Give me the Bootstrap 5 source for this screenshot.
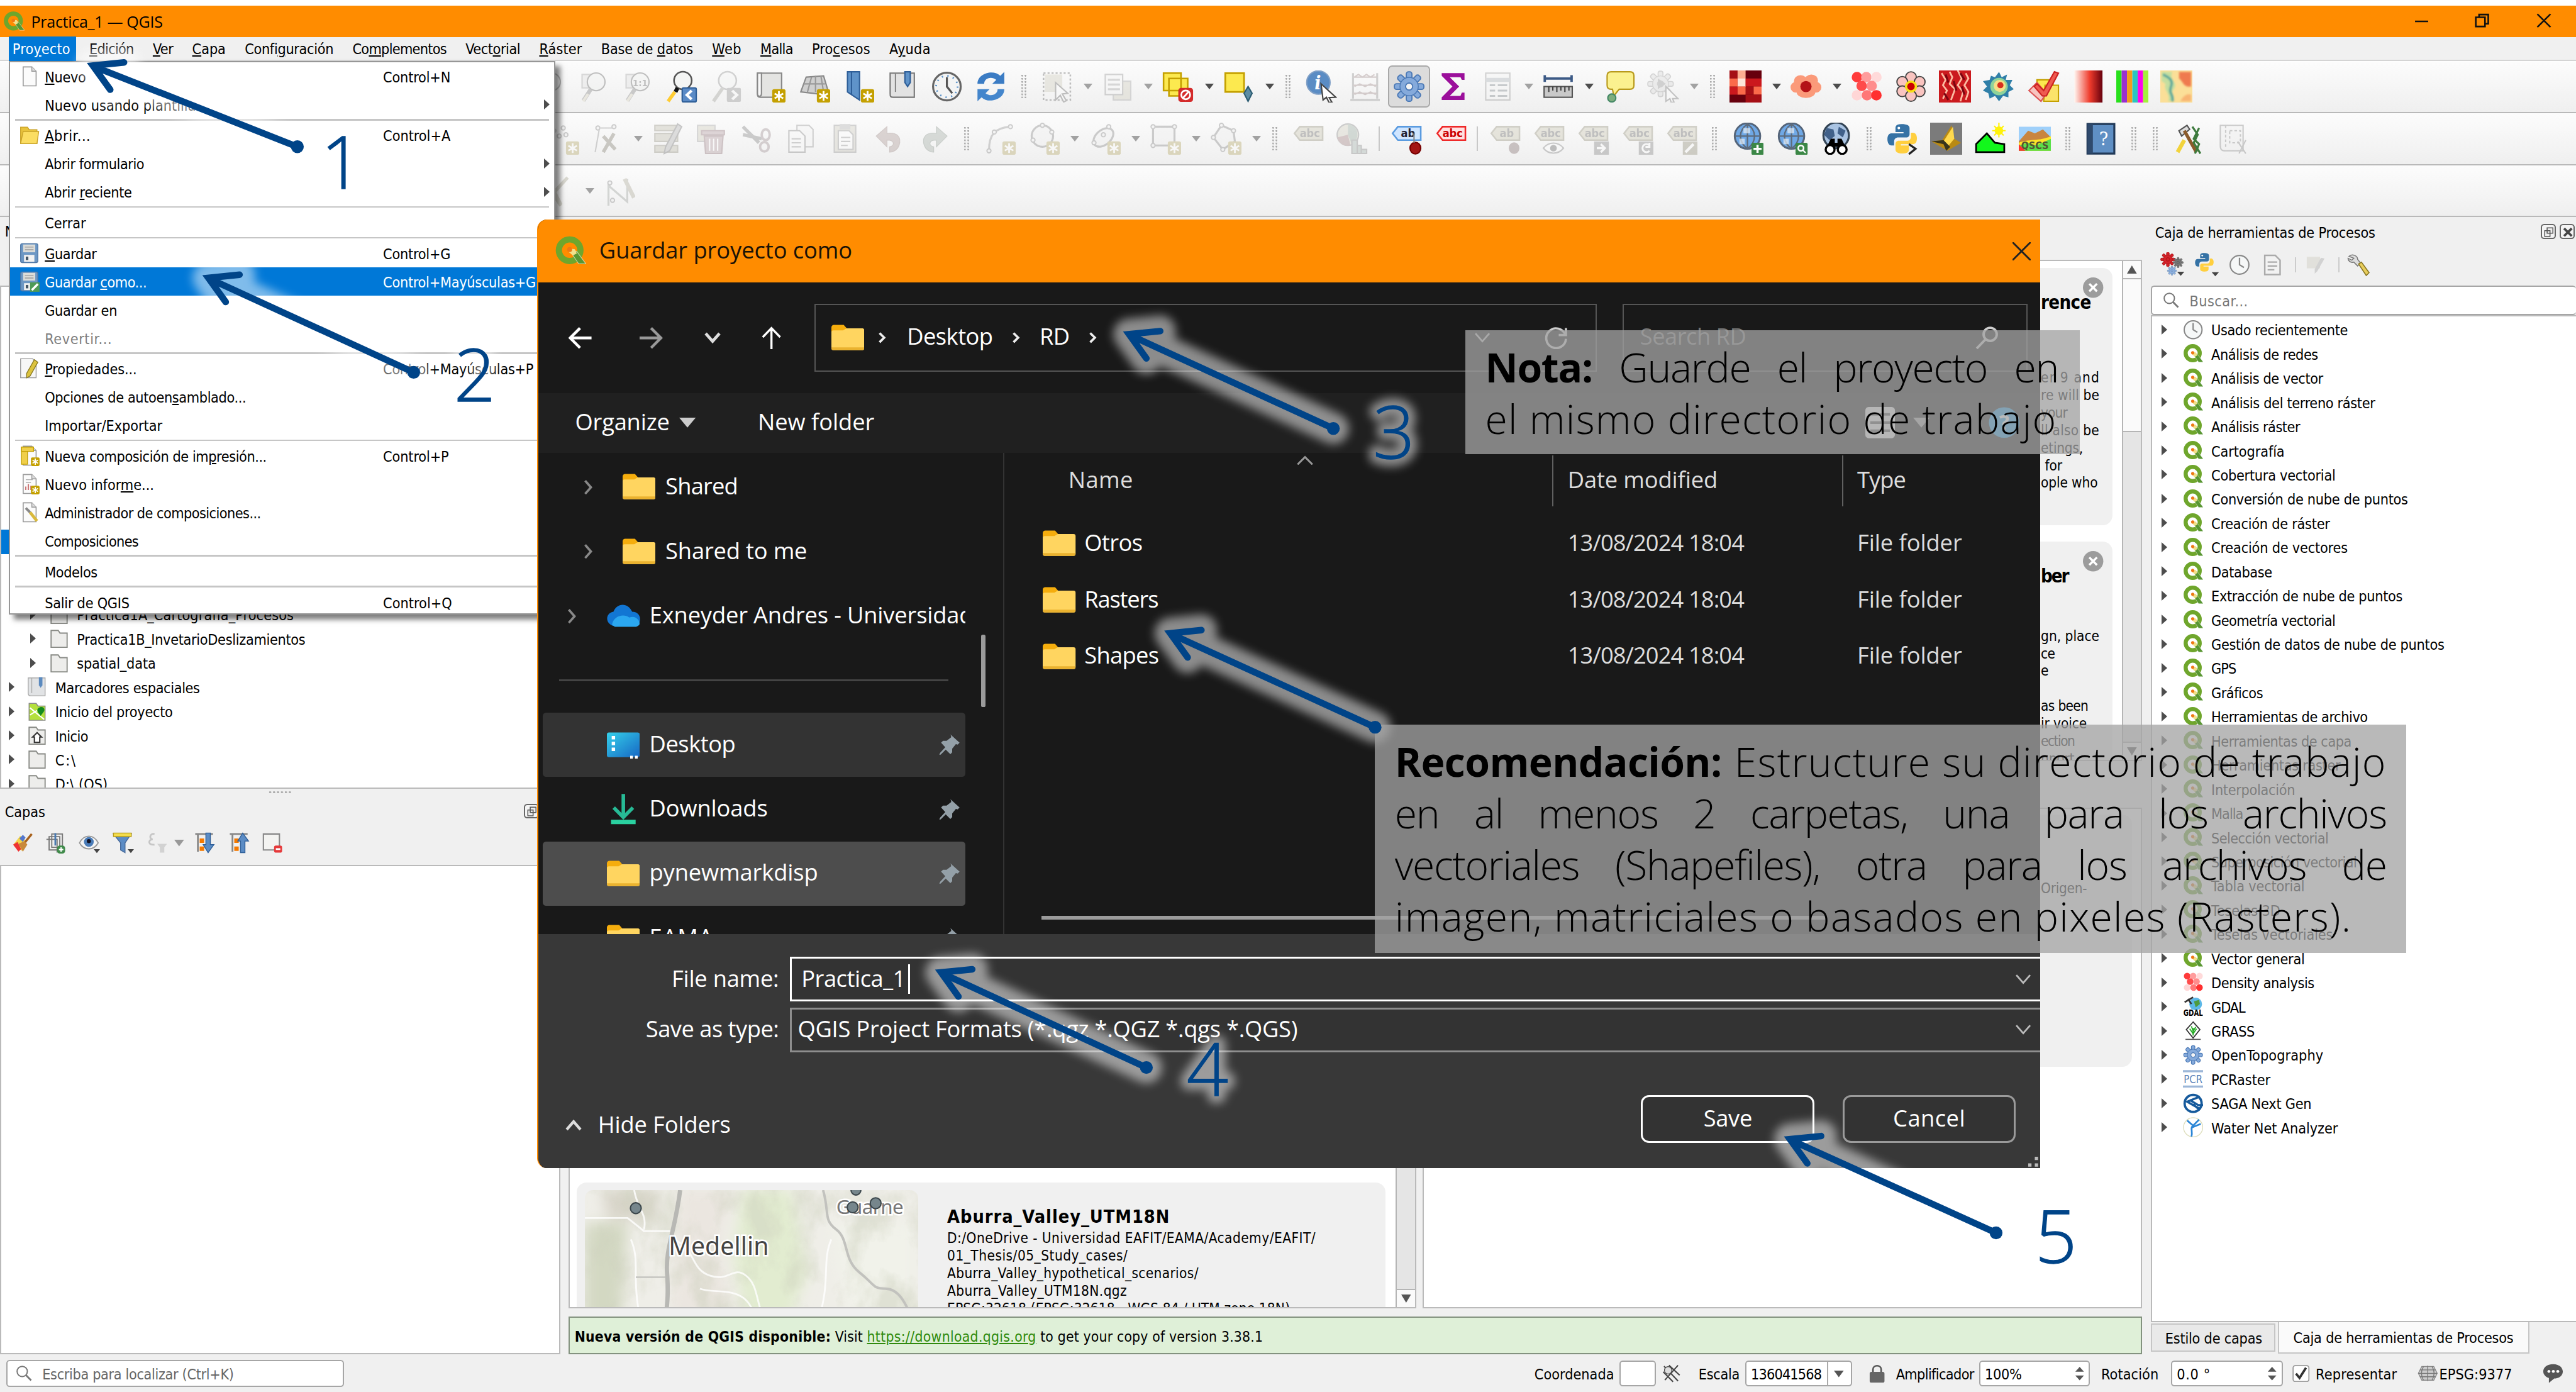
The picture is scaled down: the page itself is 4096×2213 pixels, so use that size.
<!DOCTYPE html>
<html lang="es">
<head>
<meta charset="utf-8">
<title>Practica_1 — QGIS</title>
<link href="https://cdn.jsdelivr.net/npm/bootstrap@5.3.0/dist/css/bootstrap.min.css" rel="stylesheet">
<style>
html,body{margin:0;overflow:hidden;background:#fff}
.stage{width:1568px;height:847.17px;zoom:2.612245;position:relative;overflow:hidden;background:#f0f0f0;font-family:"DejaVu Sans Condensed","DejaVu Sans",sans-serif;font-stretch:condensed;font-size:8.9px;line-height:1.2;color:#000}
.stage svg{display:block;flex:none}
.stage [data-w]{display:inline-block;white-space:nowrap;flex:none;padding-top:1.1px}
.stage .seg [data-w],.stage .note [data-w]{padding-top:0}
.stage .dlg [data-w]{padding-bottom:1.2px}
.seg{font-family:"Open Sans","Noto Sans",sans-serif;font-stretch:normal}
.topstrip{height:3.5px;background:#fff}
.titlebar{height:18.9px;background:#ff8c00;padding:0 14px 0 2px}
.menubar{height:14.6px;padding-left:7.6px;gap:11.6px;background:#f0f0f0;border-bottom:1px solid #d4d4d4}
.menubar .on{position:relative;color:#fff;z-index:1}
.menubar .on::before{content:"";position:absolute;z-index:-1;left:-2.4px;right:-3.6px;top:-1.4px;height:15px;background:#0078d7}
.tbar{height:31.75px;background:linear-gradient(#fcfcfc,#efefef);border-bottom:1px solid #b9b9b9;border-top:.5px solid #fff}
.cell{width:26.95px;height:25.4px;display:flex;align-items:center;justify-content:center;flex:none}
.cell.pressed{background:#dcdcdc;border:.8px solid #a9a9a9;border-radius:2.5px;width:25.6px;margin:0 .67px}
.caretcell{width:9.9px;display:flex;justify-content:center;flex:none;padding-left:1px}
.caretcell i{border:2.8px solid transparent;border-top:3.6px solid #4d4d4d;border-bottom:0}
.gripcell{width:13.2px;display:flex;justify-content:center;flex:none}
.gripcell i{width:3px;height:14px;background:radial-gradient(circle at .5px .5px,#aaa .45px,transparent .6px) 0 0/2px 1.9px}
.sepcell{width:6px;display:flex;justify-content:center;flex:none}
.sepcell i{width:.8px;height:15px;background:#c8c8c8}
.dim{opacity:.34;filter:saturate(.45)}
.mainarea{height:692.1px}
.dockl{width:341px;flex:none}
.pane{background:#fff;border:1px solid #bababa}
.trow{height:14.72px;display:flex;align-items:center;flex:none;white-space:nowrap}
.tri{width:0;height:0;border:3.1px solid transparent;border-left:3.8px solid #4d4d4d;border-right:0;flex:none}
.dockbtn{width:9px;height:9px;border:.9px solid #666;border-radius:2px;background:#f4f4f4;flex:none;padding:.6px}
.ctr{width:958px;margin-left:5px;flex:none}
.ncard{background:#f0f0f0;border-radius:6px;flex:none}
.sbar{width:11.7px;background:#e5e5e5;border-left:.8px solid #b5b5b5;flex:none}
.sbtn{height:11px;background:#fafafa;display:flex;align-items:center;justify-content:center;border:0 solid #b5b5b5;flex:none}
.nl{height:10.65px;white-space:nowrap}
.greenbar{height:23px;background:#dff0d8;border:1px solid #83927f;padding:1px 0 0 3px}
.greenbar a{color:#2f8a0b}
.dockr{width:258.8px;margin-left:5.2px;flex:none}
.tabx{border:.8px solid #c6c6c6;height:17px;display:flex;align-items:center;background:#e9e9e9}
.statusbar{height:23px;padding-left:4px;background:#f0f0f0}
.fld{background:#fff;border:.9px solid #a6a6a6;border-radius:2px;height:15.6px;display:flex;align-items:center;flex:none}
.menu1{position:absolute;left:5.2px;top:37px;width:333px;height:337.2px;background:#fff;border:.9px solid #979797;box-shadow:3px 3px 3px rgba(0,0,0,.5);z-index:2}
.mi{height:17.2px;display:flex;align-items:center;padding-left:5.6px}
.mi .mico{width:15.7px;flex:none}
.mi .mt{width:205.9px;flex:none}
.mi.hot{background:#0078d7;color:#fff}
.msep{height:1.5px;padding:.2px 3.2px}
.msep i{display:block;height:1px;background:#c6c6c6}
.dlg{position:absolute;left:327px;top:133.7px;width:914.7px;height:577.3px;z-index:3;background:#191919;border-left:1.1px solid #ff8c00;border-radius:6px 0 0 6px;overflow:hidden;color:#fff;font-size:13.9px;font-weight:400}
.dtitle{height:38.2px;background:#ff8c00;color:#1a1206;padding:0 5.7px 0 10px}
.dnav{height:67.2px;padding-left:18.4px}
.dbox{height:41.4px;border:1px solid #555;flex:none;display:flex;align-items:center}
.dtool{height:36.5px;background:#202020;padding:0 12.3px 0 22.3px}
.dbody{height:292.8px}
.dtree{width:283.5px;border-right:1px solid #333;position:relative;padding:1.3px 0 0 2.7px;overflow:hidden;flex:none}
.drow{height:39.2px;width:257.2px;display:flex;align-items:center;overflow:hidden;border-radius:2px;white-space:nowrap}
.thumb{position:absolute;left:269.6px;top:110.7px;width:2.5px;height:44px;border-radius:1px;background:#9b9b9b}
.lgrid{display:grid;grid-template-columns:334.4px 176.4px 1fr;align-items:center;flex:none}
.lh>div{height:31px;display:flex;align-items:center;border-right:1px solid #606060;color:#ddd}
.lh>div:last-child{border:0}
.dfoot{height:142.6px;background:#383838;padding-top:14px}
.inp{flex:1;height:27.2px;background:#333;border:1.4px solid #fff;border-right:0;display:flex;align-items:center;padding:0 5px 0 6px}
.dbtn{width:105.6px;height:29px;background:#333;border:1.4px solid #fff;border-radius:5px;color:#fff;font-size:13.9px;padding:0;line-height:1}
.note{position:absolute;z-index:5;background:rgba(163,163,163,.76);font-family:"Open Sans","Noto Sans",sans-serif;font-weight:300;font-stretch:normal;font-size:24.6px;color:#000;padding:6.4px 12px 0}
.note div{height:31.4px;line-height:31.4px;text-align:justify;text-align-last:justify;white-space:nowrap}
.note b{font-weight:700}
.ann{position:absolute;left:0;top:0;z-index:6;pointer-events:none}
.num{font-family:"Open Sans",sans-serif;font-weight:300;font-stretch:normal;font-size:44.5px}
</style>
<script src="https://cdn.jsdelivr.net/npm/bootstrap@5.3.0/dist/js/bootstrap.bundle.min.js"></script>
</head>
<body>
<div class="stage">
  <div class="topstrip"></div>
  <div class="titlebar d-flex align-items-center">
    <span data-i="q" data-s="13"></span>
    <span class="seg ms-1" style="font-size:9.6px"><span data-w="80">Practica_1 — QGIS</span></span>
    <svg class="ms-auto" width="84" height="10" viewBox="0 0 84 10" fill="none" stroke="#111" stroke-width="1"><path d="M0 5h8M74.500 .5l8 8m0-8l-8 8"/><path d="M37 2.500h5.600v5.600H37zM39 2.500V.8h5.600v5.600h-2"/></svg>
  </div>
  <div class="menubar d-flex align-items-center">
    <span class="on" data-w="35.2">Pro<u>y</u>ecto</span><span data-w="27"><u>E</u>dición</span><span data-w="12.4"><u>V</u>er</span><span data-w="20.4"><u>C</u>apa</span><span data-w="54">Confi<u>g</u>uración</span><span data-w="57.2">Co<u>m</u>plementos</span><span data-w="33.3">Vect<u>o</u>rial</span><span data-w="26"><u>R</u>áster</span><span data-w="56">Base de <u>d</u>atos</span><span data-w="17.8"><u>W</u>eb</span><span data-w="19.8"><u>M</u>alla</span><span data-w="35.4">Pro<u>c</u>esos</span><span data-w="25.2">A<u>y</u>uda</span>
  </div>
  <div class="tbar d-flex align-items-center" id="tb1" style="padding-left:320.3px"></div>
  <div class="tbar d-flex align-items-center" id="tb2" style="padding-left:329.4px"></div>
  <div class="tbar d-flex align-items-center" id="tb3" style="padding-left:326.5px"></div>

  <div class="mainarea d-flex">
    <div class="dockl d-flex flex-column">
      <div class="d-flex align-items-center" style="height:17px;padding-left:3px">Navegador</div>
      <div style="height:24.4px"></div>
      <div class="pane overflow-hidden" style="height:306.5px;padding-top:.9px" id="browser"></div>
      <div class="d-flex justify-content-center" style="height:5px;padding-top:1px"><span style="width:14px;height:2px;background:radial-gradient(circle at 1px 1px,#aaa .6px,transparent .7px) 0 0/2.4px 2px"></span></div>
      <div class="d-flex align-items-center" style="height:17px;padding-left:3px"><span data-w="24.5">Capas</span><span class="dockbtn ms-auto" data-i="float" data-s="7" style="margin-right:13px"></span></div>
      <div class="d-flex align-items-center" style="height:24.4px;padding:0 0 2.4px 5px" id="capastb"></div>
      <div class="pane flex-grow-1"></div>
    </div>

    <div class="ctr d-flex flex-column">
      <div class="d-flex" style="height:664px">
        <div class="pane d-flex" style="width:516px;margin-top:26px">
          <div class="flex-grow-1 d-flex flex-column overflow-hidden" style="padding:560.6px 6px 0 4.4px">
            <div class="ncard d-flex" style="height:110px;padding:4.8px 4.8px 0">
              <svg width="203" height="80" viewBox="0 0 203 80" style="border-radius:5px" id="map">
                <defs><filter id="ft" x="0" y="0" width="1" height="1"><feTurbulence type="fractalNoise" baseFrequency=".05 .035" numOctaves="5" seed="7"/><feColorMatrix values="0 0 0 0 .62  0 0 0 0 .64  0 0 0 0 .52  0 3 0 0 -1.3"/></filter><filter id="bl"><feGaussianBlur stdDeviation="4"/></filter></defs>
                <rect width="203" height="80" fill="#efeee8"/>
                <g filter="url(#bl)"><path d="M58 0h32l-8 30 8 50H52z" fill="#ebe6e0"/><path d="M96 0h30l10 50-12 30H98L90 40z" fill="#e2ecd0"/><path d="M0 20h26l-4 60H0z" fill="#d3d8c2"/><path d="M10 0h34v18H14z" fill="#d9d5ca"/><path d="M150 20h50v60h-40z" fill="#f1f2ea"/></g>
                <rect width="203" height="80" filter="url(#ft)" opacity=".5"/>
                <g fill="none" stroke="#fff" stroke-width="1.1" opacity=".8"><path d="M0 17h26l10 8h16M30 0c2 12 8 14 6 24M28 30c6 14 0 22 6 50M54 30c14 6 10 18 22 22s14-6 22 0 6 18 12 28M70 60c10 4 30-4 34 20M150 30c-6 14 0 24-8 50"/></g>
                <path d="M58 0c-3 24-9 36-8 50s0 20-1 30" fill="none" stroke="#b8b8b4" stroke-width="2.600"/>
                <path d="M145 0c4 14 0 18 8 24s4 18 14 26 8 10 16 10 12 8 18 22" fill="none" stroke="#c2c2be" stroke-width="1.500"/>
                <path d="M31 53h18" stroke="#c5c5c0" stroke-width="1"/>
                <g font-family="Noto Sans" fill="#444" stroke="#fff" stroke-width="2" paint-order="stroke"><text x="51" y="39.5" font-size="15" textLength="61">Medellin</text><text x="153" y="14.5" font-size="12" textLength="41" fill="#777">Guarne</text></g>
                <g fill="#76868c" stroke="#3b464b" stroke-width=".8"><circle cx="31" cy="11" r="3.3"/><circle cx="163" cy="10.5" r="3.3"/><circle cx="177" cy="8" r="3.3"/><circle cx="165" cy="0" r="3"/></g>
              </svg>
              <div style="margin-left:17.6px;padding-top:8.4px;font-size:8.6px">
                <div class="fw-bold" style="font-size:11px;height:14.7px"><span data-w="135.6">Aburra_Valley_UTM18N</span></div>
                <div class="nl"><span data-w="224.3">D:/OneDrive - Universidad EAFIT/EAMA/Academy/EAFIT/</span></div>
                <div class="nl"><span data-w="110">01_Thesis/05_Study_cases/</span></div>
                <div class="nl"><span data-w="153">Aburra_Valley_hypothetical_scenarios/</span></div>
                <div class="nl"><span data-w="109.5">Aburra_Valley_UTM18N.qgz</span></div>
                <div class="nl"><span data-w="208.7">EPSG:32618 (EPSG:32618 - WGS 84 / UTM zone 18N)</span></div>
              </div>
            </div>
          </div>
          <div class="sbar d-flex flex-column justify-content-end"><div class="sbtn" style="border-top-width:.8px"><svg width="6" height="5"><path d="M0 0h6L3 5z" fill="#555"/></svg></div></div>
        </div>
        <div class="d-flex flex-column" style="width:438px;margin-left:4px;padding-top:26px">
          <div class="pane d-flex" style="height:305px">
            <div class="flex-grow-1 overflow-hidden" style="padding:4px 5.6px 0 4px;font-size:8.6px">
              <div class="ncard d-flex flex-column" style="height:156.5px;padding:6px 5.6px 0 371.5px">
                <span class="ms-auto" data-i="xb" data-s="12.4"></span>
                <div class="fw-bold" style="font-size:11.2px;height:43.4px;margin-top:-5px"><span data-w="30.5">rence</span></div>
                <div class="nl mt-1"><span data-w="36">er 9 and</span></div>
                <div class="nl"><span data-w="35.6">re will be</span></div>
                <div class="nl"><span data-w="16">your</span></div>
                <div class="nl"><span data-w="35.6">ll also be</span></div>
                <div class="nl"><span data-w="25.6">etings,</span></div>
                <div class="nl" style="padding-left:2.5px"><span data-w="10.5">for</span></div>
                <div class="nl"><span data-w="34.6">ople who</span></div>
              </div>
              <div class="ncard d-flex flex-column" style="height:156.5px;margin-top:10px;padding:6px 5.6px 0 371.5px">
                <span class="ms-auto" data-i="xb" data-s="12.4"></span>
                <div class="fw-bold" style="font-size:11.2px;height:38px;margin-top:-5px"><span data-w="16.6">ber</span></div>
                <div class="nl"><span data-w="35.6">gn, place</span></div>
                <div class="nl"><span data-w="8.6">ce</span></div>
                <div class="nl"><span data-w="4.6">e</span></div>
                <div class="nl"></div>
                <div class="nl"><span data-w="28.8">as been</span></div>
                <div class="nl"><span data-w="28">ir voice</span></div>
                <div class="nl"><span data-w="20.4">ection</span></div>
                <div class="nl"><span data-w="20.4">nport</span></div>
              </div>
            </div>
            <div class="sbar d-flex flex-column"><div class="sbtn" style="border-bottom-width:.8px"><svg width="6" height="5"><path d="M0 5h6L3 0z" fill="#555"/></svg></div><div style="height:93px;background:#fafafa;border-bottom:.8px solid #b5b5b5"></div><div class="sbtn mt-auto" style="border-top-width:.8px"><svg width="6" height="5"><path d="M0 0h6L3 5z" fill="#555"/></svg></div></div>
          </div>
          <div class="pane flex-grow-1" style="margin-top:28.2px;padding:3.6px 5.6px 0 4px;font-size:8.6px">
            <div class="ncard" style="height:153.4px;padding:38.5px 0 0 371.5px"><div class="nl"><span data-w="28">Origen-</span></div></div>
          </div>
        </div>
      </div>
      <div class="greenbar d-flex align-items-center" style="margin-top:5px"><span style="font-size:8.7px"><b data-w="156">Nueva versión de QGIS disponible:</b> <span data-w="17">Visit</span> <a href="#" data-w="103">https://download.qgis.org</a> <span data-w="135.500">to get your copy of version 3.38.1</span></span></div>
    </div>

    <div class="dockr d-flex flex-column">
      <div class="d-flex align-items-center" style="height:17.4px;padding:0 .8px 0 2.6px"><span data-w="134">Caja de herramientas de Procesos</span><span class="dockbtn ms-auto" data-i="float" data-s="7"></span><span class="dockbtn" data-i="xdock" data-s="7" style="margin-left:2.6px"></span></div>
      <div class="d-flex align-items-center" style="height:23px;padding-left:5px" id="ptb"></div>
      <div class="fld" style="height:17.8px;border-right:0;padding-left:6.5px;margin-top:1.2px"><span data-i="mags" data-s="10"></span><span style="margin-left:6.3px;color:#777" data-w="35.7">Buscar...</span></div>
      <div class="pane overflow-hidden border-end-0" style="height:612.6px;padding-top:.5px;margin-top:.3px" id="ptree"></div>
      <div class="d-flex align-items-start"><div class="tabx" style="width:76px;padding-left:8px;margin-top:1px"><span data-w="59">Estilo de capas</span></div><div class="tabx" style="width:153px;height:19.4px;padding-left:8.5px;margin-left:1.5px;background:#fafafa;border-top:0"><span data-w="134">Caja de herramientas de Procesos</span></div></div>
    </div>
  </div>

  <div class="statusbar d-flex align-items-center">
    <div class="fld" style="width:205.5px;height:16.4px;padding-left:5px"><span data-i="mags" data-s="10"></span><span style="margin-left:6px;color:#666" data-w="116.5">Escriba para localizar (Ctrl+K)</span></div>
    <span style="margin-left:724.5px" data-w="48.5">Coordenada</span>
    <div class="fld" style="width:22px;margin-left:3.4px"></div>
    <span style="margin-left:3.5px" data-i="wheels" data-s="12"></span>
    <span style="margin-left:10.5px" data-w="25">Escala</span>
    <div class="fld" style="width:65px;margin-left:3.6px;padding-left:2.5px"><span data-w="43">136041568</span><span style="border-left:.8px solid #aaa;height:14px;margin-left:3.4px;padding:5.4px 0 0 3.4px"><svg width="6" height="4"><path d="M0 0h6L3 4z" fill="#555"/></svg></span></div>
    <span style="margin-left:9px" data-i="lock" data-s="12"></span>
    <span style="margin-left:5.600px" data-w="47.5">Amplificador</span>
    <div class="fld" style="width:67.6px;margin-left:3px;padding-left:2.8px"><span data-w="22.5">100%</span><span class="ms-auto" style="margin-right:1px" data-i="spin" data-s="9"></span></div>
    <span style="margin-left:6.8px" data-w="35">Rotación</span>
    <div class="fld" style="width:68px;margin-left:7.5px;padding-left:2.8px"><span data-w="20.5">0.0 °</span><span class="ms-auto" style="margin-right:1px" data-i="spin" data-s="9"></span></div>
    <span style="margin-left:6px" data-i="check" data-s="10.5"></span>
    <span style="margin-left:3.6px" data-w="49.5">Representar</span>
    <span style="margin-left:12.6px" data-i="wglobe" data-s="12.5"></span>
    <span style="margin-left:.6px" data-w="44.5">EPSG:9377</span>
    <span style="margin-left:18.5px" data-i="talk" data-s="13"></span>
  </div>

  <div class="menu1" id="menu1"></div>

  <div class="dlg seg">
    <div class="dtitle d-flex align-items-center"><span data-i="q" data-s="19"></span><span style="margin-left:8px" data-w="154">Guardar proyecto como</span><svg class="ms-auto" width="11" height="11" viewBox="0 0 11 11"><path d="M0 0l11 11M11 0L0 11" stroke="#222" stroke-width="1.1"/></svg></div>
    <div class="dnav d-flex align-items-center">
      <svg width="14" height="14" viewBox="0 0 14 14" fill="none" stroke="#fff" stroke-width="1.7"><path d="M14 7H1M7 1L1 7l6 6"/></svg>
      <svg width="14" height="14" viewBox="0 0 14 14" fill="none" stroke="#999" stroke-width="1.7" style="margin-left:29.3px"><path d="M0 7h13M7 1l6 6-6 6"/></svg>
      <svg width="10" height="7" viewBox="0 0 10 7" fill="none" stroke="#ddd" stroke-width="1.8" style="margin-left:25.4px"><path d="M.8.8L5 5.6 9.2.8"/></svg>
      <svg width="12" height="14" viewBox="0 0 12 14" fill="none" stroke="#fff" stroke-width="1.3" style="margin-left:24.6px"><path d="M6 14V1M.7 6.5L6 1l5.3 5.5"/></svg>
      <div class="dbox" style="width:476.2px;margin-left:20.4px;padding:0 17px 0 9.4px">
        <span data-i="folder" data-s="20"></span>
        <span data-i="chev" data-s="7.5" style="margin-left:7px"></span><span style="margin-left:11.6px" data-w="52.2">Desktop</span>
        <span data-i="chev" data-s="7.5" style="margin-left:10px"></span><span style="margin-left:11px" data-w="18.2">RD</span>
        <span data-i="chev" data-s="7.5" style="margin-left:10px"></span>
        <svg class="ms-auto" width="10" height="7" viewBox="0 0 10 7" fill="none" stroke="#bbb" stroke-width="1.1"><path d="M.8.8L5 5.6 9.2.8"/></svg>
        <svg width="14" height="14" viewBox="0 0 14 14" fill="none" stroke="#ccc" stroke-width="1.4" style="margin-left:33px"><path d="M12.6 5A6 6 0 1 0 13 7.5M13 1v4.2H8.6"/></svg>
      </div>
      <div class="dbox" style="width:246.5px;margin-left:15.5px;padding:0 17px 0 10px;color:#777"><span data-w="64.5">Search RD</span><svg class="ms-auto" width="14" height="14" viewBox="0 0 14 14" fill="none" stroke="#ccc" stroke-width="1.5"><circle cx="9" cy="4.8" r="4"/><path d="M6.2 7.8L.8 13.4"/></svg></div>
    </div>
    <div class="dtool d-flex align-items-center">
      <span data-w="57.5">Organize</span><svg width="10" height="6" style="margin-left:6px"><path d="M0 0h10L5 6z" fill="#ccc"/></svg>
      <span style="margin-left:37.7px" data-w="71">New folder</span>
      <svg class="ms-auto" width="18" height="19" viewBox="0 0 18 19"><rect width="18" height="19" rx="2" fill="#f0f0f0"/><path d="M3 4.5h12M3 9.5h12M3 14.5h12" stroke="#555" stroke-width="1.6"/></svg>
      <svg width="10" height="6" style="margin-left:11px"><path d="M0 0h10L5 6z" fill="#aaa"/></svg>
      <svg width="19" height="19" viewBox="0 0 19 19" style="margin-left:36px"><circle cx="9.5" cy="9.5" r="9.3" fill="#1d9fe8"/><text x="9.5" y="14" font-size="13" font-weight="700" text-anchor="middle" fill="#fff">?</text></svg>
    </div>
    <div class="dbody d-flex">
      <div class="dtree">
        <div class="drow"><span data-i="chevt" data-s="12" style="margin-left:21.9px"></span><span data-i="folder" data-s="20" style="margin-left:14.7px"></span><span style="margin-left:6px" data-w="44">Shared</span></div>
        <div class="drow"><span data-i="chevt" data-s="12" style="margin-left:21.9px"></span><span data-i="folder" data-s="20" style="margin-left:14.7px"></span><span style="margin-left:6px" data-w="86.2">Shared to me</span></div>
        <div class="drow"><span data-i="chevt" data-s="12" style="margin-left:11.9px"></span><span data-i="cloud" data-s="21" style="margin-left:14.5px"></span><span style="margin-left:5.5px" data-w="197">Exneyder Andres - Universidad</span></div>
        <div class="drow"><span style="height:1px;width:237px;background:#444;margin-left:9.8px"></span></div>
        <div class="drow" style="background:#333"><span data-i="desk" data-s="20" style="margin-left:38.8px"></span><span style="margin-left:6px" data-w="52.4">Desktop</span><span class="ms-auto" style="margin-right:3px" data-i="pin" data-s="13.5"></span></div>
        <div class="drow"><span data-i="down" data-s="20" style="margin-left:38.8px"></span><span style="margin-left:6px" data-w="72">Downloads</span><span class="ms-auto" style="margin-right:3px" data-i="pin" data-s="13.5"></span></div>
        <div class="drow" style="background:#4d4d4d"><span data-i="folder" data-s="20" style="margin-left:38.8px"></span><span style="margin-left:6px" data-w="102.6">pynewmarkdisp</span><span class="ms-auto" style="margin-right:3px" data-i="pin" data-s="13.5"></span></div>
        <div class="drow"><span data-i="folder" data-s="20" style="margin-left:38.8px"></span><span style="margin-left:6px" data-w="39">EAMA</span><span class="ms-auto" style="margin-right:3px" data-i="pin" data-s="13.5"></span></div>
        <div class="thumb"></div>
      </div>
      <div class="flex-grow-1 d-flex flex-column position-relative">
        <svg class="position-absolute" width="10" height="6" viewBox="0 0 10 6" style="left:178px;top:1.5px" fill="none" stroke="#999" stroke-width="1.1"><path d="M.5 5.5L5 1l4.5 4.5"/></svg>
        <div class="lgrid lh" style="margin-top:1.6px;margin-bottom:5.4px"><div style="padding-left:39px"><span data-w="39.5">Name</span></div><div style="padding-left:8.6px"><span data-w="91.2">Date modified</span></div><div style="padding-left:8.4px"><span data-w="29.4">Type</span></div></div>
        <div id="flist"></div>
        <div class="mt-auto" style="height:2.6px;width:478px;background:#9b9b9b;margin:0 0 8.6px 22.8px"></div>
      </div>
    </div>
    <div class="dfoot d-flex flex-column">
      <div class="d-flex align-items-center"><div class="text-end" style="width:146.3px"><span data-w="65.2">File name:</span></div><div class="inp" style="margin-left:6.6px"><span data-w="63.4">Practica_1</span><span style="width:1px;height:18px;background:#fff;margin-left:1.6px"></span><svg class="ms-auto" width="10" height="7" viewBox="0 0 10 7" fill="none" stroke="#bbb" stroke-width="1.1"><path d="M.8.8L5 5.6 9.2.8"/></svg></div></div>
      <div class="d-flex align-items-center" style="margin-top:3.6px"><div class="text-end" style="width:146.3px"><span data-w="81">Save as type:</span></div><div class="inp" style="margin-left:6.6px;border-color:#8e8e8e;padding-left:3.8px"><span data-w="304.2">QGIS Project Formats (*.qgz *.QGZ *.qgs *.QGS)</span><svg class="ms-auto" width="10" height="7" viewBox="0 0 10 7" fill="none" stroke="#bbb" stroke-width="1.1"><path d="M.8.8L5 5.6 9.2.8"/></svg></div></div>
      <div class="d-flex align-items-center" style="margin-top:26.2px;padding:0 14.6px 0 16.2px"><svg width="10" height="7" viewBox="0 0 10 7" fill="none" stroke="#ddd" stroke-width="1.7" style="margin-top:8px"><path d="M.8 6L5 1.2 9.2 6"/></svg><span style="margin:8px 0 0 10px" data-w="80.8">Hide Folders</span>
        <button class="btn dbtn ms-auto"><span data-w="29.6">Save</span></button><button class="btn dbtn" style="border-color:#9a9a9a;margin-left:17px"><span data-w="44">Cancel</span></button></div>
      <svg class="ms-auto mt-auto" width="7" height="7" viewBox="0 0 7 7" fill="#bbb"><path d="M4 0h2v2H4zM4 4h2v2H4zM0 4h2v2H0z"/></svg>
    </div>
  </div>

  <svg class="ann" style="z-index:4" width="1568" height="847" viewBox="0 0 1568 847" fill="none" stroke-linecap="round" id="glow"></svg>
  <div class="note" style="left:892px;top:201px;width:374px;height:75.3px;padding-right:13px"><div class="ls"><b>Nota:</b> Guarde el proyecto en</div><div><span data-w="348">el mismo directorio de trabajo</span></div></div>
  <div class="note" style="left:837px;top:441.1px;width:627.7px;height:138.7px"><div><b data-w="199">Recomendación:</b> <span data-w="397">Estructure su directorio de trabajo</span></div><div class="ls">en al menos 2 carpetas, una para los archivos</div><div class="ls">vectoriales (Shapefiles), otra para los archivos de</div><div><span data-w="582.5">imagen, matriciales o basados en pixeles (Rasters).</span></div></div>
  <svg class="ann" width="1568" height="847" viewBox="0 0 1568 847" fill="none" stroke-linecap="round" id="ann"></svg>
</div>

<script>
const star='<rect x="14" y="14" width="10" height="10" rx="1.5" fill="#c4a000"/><path d="M19 15.4v7.2M15.8 17.2l6.4 3.6M15.8 20.8l6.4-3.6" stroke="#fff" stroke-width="1.3"/>';
const mag='<path d="M4 3h9v10H4z" fill="#ddd" stroke="#999"/><circle cx="14.5" cy="8.5" r="6.6" fill="#eef0ef" stroke="#555"/><path d="M10.5 14L5 22.5" stroke="#777" stroke-width="3"/><path d="M8.5 17.5L4.8 23" stroke="#ddd2a0" stroke-width="2"/>';
const tag=(t,f,s,c)=>`<path d="M6 3h17v10H6L2 8z" fill="${f}" stroke="${s}" stroke-width="1.2"/><text x="13.5" y="11" font-size="8.5" font-weight="700" font-family="DejaVu Sans Condensed" text-anchor="middle" fill="${c}">${t}</text>`;
const gear=(cx,cy,r,f,s,h)=>{let o='';for(let i=0;i<8;i++){o+=`<rect x="${cx-r*.19}" y="${cy-r}" width="${r*.38}" height="${r*.6}" rx="${r*.15}" fill="${f}" stroke="${s}" stroke-width="${r*.08}" transform="rotate(${i*45} ${cx} ${cy})"/>`}return o+`<circle cx="${cx}" cy="${cy}" r="${r*.62}" fill="${f}" stroke="${s}" stroke-width="${r*.06}"/><circle cx="${cx}" cy="${cy}" r="${r*.24}" fill="${h||'#f5f5f5'}" stroke="${s}" stroke-width="${r*.08}"/>`};
const py='<path d="M11.5 1C7 1 7 3 7 4.500V7h6v1H4C1.500 8 1 10.500 1 12.500S2 17 4 17h2v-3c0-2 1.500-3 3-3h6c1.500 0 2.500-1 2.500-2.500V4c0-2-2-3-6-3z" fill="#3572a5"/><path d="M12.500 23c4.500 0 4.500-2 4.500-3.500V17h-6v-1h9c2.500 0 3-2.500 3-4.500S22 7.500 20 7.500h-1.500v3c0 2-1.500 3-3 3H9.500C8 13.500 7 14.500 7 16v4c0 2 2 3 5.500 3z" fill="#ffcf3f"/><circle cx="9.500" cy="4" r="1" fill="#fff"/>';
const globe='<circle cx="12" cy="10" r="9.500" fill="#6fa8e6" stroke="#55657a" stroke-width="1.400"/><path d="M12 .5v19M3 10h18M12 1C5 6 5 14 12 19.500M12 1c7 5 7 13 0 18.500" fill="none" stroke="#5d6b7c" stroke-width="1.100"/><path d="M9 4h5v4H9zM6 12h4v4H6z" fill="#e6eef7" opacity=".7"/>';
const pts=p=>p.map(([x,y])=>`<circle cx="${x}" cy="${y}" r="1.500" fill="#eee" stroke="#777" stroke-width=".9"/>`).join('');
const fold='<path d="M3 3h8l2 3h8v16H3z" fill="#ededeb" stroke="#888a85" stroke-width="1.300"/>';
const page='<path d="M5 1h10l5 5v17H5z" fill="#fbfbfb" stroke="#999" stroke-width="1.200"/><path d="M15 1v5h5" fill="#ddd" stroke="#999"/>';
const disk='<rect x="2" y="1" width="20" height="22" rx="2" fill="#6d97c4" stroke="#4f77a5"/><rect x="5" y="2" width="14" height="9" fill="#dcdcd8"/><path d="M7 5h10M7 8h10" stroke="#999"/><rect x="6" y="14" width="12" height="8" fill="#f2f2f2"/><rect x="8" y="16" width="3" height="4" fill="#456"/>';
const I={
q:'<circle cx="11.500" cy="11.500" r="8.300" fill="none" stroke="#6fa62c" stroke-width="4.800"/><path d="M11 11l6 1.500L24 22h-5.500z" fill="#589632" stroke="#fff8" stroke-width=".6"/><path d="M10.500 10l5 .8 1.500 3.200-3 1.500-3-2.500z" fill="#f2e08a"/><circle cx="11.500" cy="11" r="1.900" fill="#ee7913"/>',
zf:mag,zl:mag,z1:mag+'<text x="14.500" y="11.500" font-size="7" text-anchor="middle" font-weight="700" fill="#555">1:1</text>',
zp:'<circle cx="13.500" cy="7.500" r="6.600" fill="#f4f5f4" stroke="#555" stroke-width="1.200"/><path d="M9.500 13L8 16" stroke="#111" stroke-width="3"/><path d="M7.500 16L2.500 23" stroke="#fc3" stroke-width="2.600"/><rect x="13" y="13" width="10.500" height="10.500" rx="1" fill="#5a8ac6" stroke="#2e5e98"/><path d="M20 15l-3.500 3.300L20 21.500" fill="none" stroke="#fff" stroke-width="2"/>',
zn:'<circle cx="13.500" cy="7.500" r="6.600" fill="#f4f5f4" stroke="#888" stroke-width="1.200"/><path d="M10 13L3 23" stroke="#998" stroke-width="2.600"/><rect x="13" y="13" width="10.500" height="10.500" rx="1" fill="#888"/><path d="M17 15l3.500 3.300L17 21.500" fill="none" stroke="#fff" stroke-width="2"/>',
nm:'<path d="M3 2h18v18H6c-3 0-3-1-3-3z" fill="#e4e4e2" stroke="#888"/><path d="M3 2v15c0 3 3 3 3 0V2z" fill="#f8f8f8" stroke="#888"/>'+star,
n3:'<path d="M6 5l13-1 3 10-3 4-17-2z" fill="#cfcfcf" stroke="#888"/><path d="M10 5L7 16m6-12v12m4-12l2 12M4 10h16" stroke="#999" fill="none"/>'+star,
bn:'<path d="M4 1h9v21l-4.500-3L4 16z" fill="#5f93c9" stroke="#2e5e98"/><path d="M7 1v17" stroke="#2e5e98"/>'+star,
bm:'<path d="M3 2h18v18H5c-2 0-2-1-2-3z" fill="#e2e2e2" stroke="#777"/><path d="M7 2v14" stroke="#888"/><path d="M14 1h4v8l-2 3-2-3z" fill="#5f93c9" stroke="#2e5e98"/>',
clk:'<circle cx="12" cy="12" r="10.300" fill="#f3f4f4" stroke="#666" stroke-width="1.500"/><circle cx="12" cy="12" r="8" fill="none" stroke="#5c93c9" stroke-width="1.300" stroke-dasharray="1 3.200"/><path d="M12 5v7l4 5" fill="none" stroke="#555" stroke-width="1.500"/>',
clks:'<circle cx="12" cy="12" r="10.500" fill="#f6f8f8" stroke="#888" stroke-width="1.500"/><path d="M12 4v8l5 3" fill="none" stroke="#888" stroke-width="1.600"/>',
rf:'<path d="M2 10C2 2 14-1 19 4l3-3v9h-9l3-3C12 4 7 6 7 10z" fill="#3b7cc4"/><path d="M22 14c0 8-12 11-17 6l-3 3v-9h9l-3 3c4 3 9 1 9-3z" fill="#4486cc"/>',
sel:'<path d="M3 3h13v13H3z" fill="#cfc9a0"/><rect x="2" y="2" width="20" height="20" fill="none" stroke="#555" stroke-dasharray="1.500 1.500" stroke-width="1.200"/><path d="M11 9l9 8-4 .5 3 5-2 1-2.500-5L11 22z" fill="#fff" stroke="#555"/>',
frm:'<path d="M9 8h13v14H9z" fill="#cfc9a0" stroke="#999"/><path d="M3 3h13v15H3z" fill="#f6f6f6" stroke="#888"/><path d="M5 7h9M5 10.500h9M5 14h9" stroke="#999" stroke-width="1.500"/>',
des:'<g fill="#fce94f" stroke="#c4a000" stroke-width="1.200"><path d="M1 2h13v13H1zM5 6h14v13H5z"/></g><rect x="12" y="13" width="11" height="10.500" rx="2" fill="#d42b2b"/><circle cx="17.500" cy="18.200" r="3.300" fill="none" stroke="#fff" stroke-width="1.300"/><path d="M15.500 20.500l4-4.500" stroke="#fff" stroke-width="1.300"/>',
loc:'<path d="M2 2h14v14H2z" fill="#fce94f" stroke="#c4a000" stroke-width="1.300"/><path d="M19 12l3 5-3 6-3-6z" fill="#5d8da3" stroke="#2d5d73"/>',
inf:'<circle cx="10" cy="9" r="8.700" fill="#5a8cc4" stroke="#7f9fc6"/><text x="9.500" y="14" font-size="14" font-style="italic" font-weight="700" font-family="DejaVu Serif" text-anchor="middle" fill="#fff">i</text><path d="M12 10l11 10-5 .3 2 3.200-2 .5-2-4-2.500 2z" fill="#fff" stroke="#444"/>',
aba:'<path d="M3 2v19M21 2v19M1 22h22" stroke="#888" stroke-width="1.500"/><path d="M4 5l3-2 3 2 3-2 3 2 3-2M4 12l4-2 4 2 4-2 4 2M4 18l4-2 4 2 4-2 4 2M3 5h18M3 11h18M3 17h18" fill="none" stroke="#a77"/>',
gear:gear(12,12,11,'#85aadb','#4a78b5'),
sig:'<path d="M3 2h17v5h-2l-1-2H9l7 7-7 7h8l1-2.500h2V22H3v-2l8-8-8-8z" fill="#9b0f9b"/>',
tbl:'<path d="M3 2h18v20H3z" fill="#f4f4f4" stroke="#888"/><path d="M3 7h18" stroke="#9ab" stroke-width="3"/><path d="M6 11h4m2 0h7M6 15h4m2 0h7M6 19h4m2 0h7" stroke="#678" stroke-width="1.400"/>',
rul:'<path d="M2 6h20M2 3.500v5M22 3.500v5" stroke="#3c5a86" stroke-width="1.800"/><rect x="1.500" y="12" width="21" height="8" fill="#c9c9c9" stroke="#555"/><path d="M5 12v4m3-4v3m3-3v4m3-4v3m3-3v4m3-4v3" stroke="#444"/>',
bal:'<path d="M6 1h14c2 0 3 1 3 3v7c0 2-1 3-3 3h-8l-4 5-1-5H6c-2 0-3-1-3-3V4c0-2 1-3 3-3z" fill="#fbf18f" stroke="#b89a1c"/><ellipse cx="6.500" cy="20.500" rx="3" ry="3" fill="#7eae7e" stroke="#486"/>',
zg:'<g opacity=".8">'+gear(10,10,9.500,'#ccc','#777')+'</g><path d="M8 6l6 4-6 4z" fill="#888"/><path d="M14 12l9 9-4 0 1 2.500-2 .5-1-3-3 2z" fill="#fff" stroke="#666"/>',
g1:'<path d="M0 0h24v24H0z" fill="#67000d"/><path d="M0 0h6v6H0zM12 12h6v6h-6z" fill="#a50f15"/><path d="M6 0h6v12H6z" fill="#fcae91"/><path d="M6 6h6v6H6z" fill="#fee5d9"/><path d="M0 12h6v6H0zM12 6h12v6H12z" fill="#cb181d"/><path d="M6 12h6v6H6zM18 12h6v6h-6zM0 6h6v6H0z" fill="#fb6a4a"/><path d="M12 18h12v6H12z" fill="#a50f15"/>',
g2:'<g fill="#fb9a7a"><ellipse cx="8" cy="8" rx="5" ry="4.500"/><ellipse cx="16" cy="7.500" rx="5" ry="4.500"/><circle cx="4.500" cy="12.500" r="4"/><circle cx="19.500" cy="12.500" r="4"/><ellipse cx="12" cy="16" rx="7" ry="4.500"/></g><circle cx="12" cy="12" r="4.200" fill="#b31217"/>',
hx:'<g><circle cx="5" cy="5" r="3.900" fill="#ff3b3b"/><circle cx="12" cy="5" r="3.900" fill="#ff9c9c"/><circle cx="19.500" cy="5" r="3.900" fill="#ffdada"/><circle cx="8.500" cy="11.500" r="3.900" fill="#ff4b4b"/><circle cx="16" cy="11.500" r="3.900" fill="#ff8d8d"/><circle cx="5" cy="18.500" r="3.900" fill="#ffd6d6"/><circle cx="12.500" cy="18.500" r="3.900" fill="#ff7777"/><circle cx="19.500" cy="18.500" r="3.900" fill="#ff2f2f"/></g>',
fl:'<g fill="#f9c4c0" stroke="#444" stroke-width=".9"><circle cx="12" cy="5" r="4"/><circle cx="5.500" cy="8.500" r="4"/><circle cx="18.500" cy="8.500" r="4"/><circle cx="5.500" cy="15.500" r="4"/><circle cx="18.500" cy="15.500" r="4"/><circle cx="12" cy="19" r="4"/></g><circle cx="12" cy="12" r="4.500" fill="#f7e017"/><circle cx="12" cy="12" r="2.800" fill="#c00"/>',
tx:'<path d="M0 0h24v24H0z" fill="#cb1a1e"/><path d="M2 2l3 5-2 4 3 4-3 6M8 1l2 4-2 5 4 4-3 8M14 0l3 6-3 5 4 5-2 7M20 2l2 4-3 5 3 5-2 6" stroke="#fcbba1" stroke-width="1.300" fill="none"/><path d="M5 3l2 6M11 8l2 7M17 12l2 6M4 17l3 5M16 2l3 5" stroke="#7a0410" stroke-width="1.500"/>',
spl:'<path d="M12 1l2 4 4-2-1 4 5 0-2 4 3 3-4 2 0 4-4-1-3 4-3-4-4 2-1-4-4-2 3-3-3-4 5-1 1-3 3 1z" fill="#2f7fa8"/><circle cx="12" cy="12" r="6.500" fill="#8ed39a"/><circle cx="12.500" cy="11.500" r="4.500" fill="#f5e087"/><circle cx="13" cy="11" r="2.300" fill="#d7301f"/>',
ck:'<path d="M7 7h12v13H7z" fill="#fce94f" stroke="#c4a000"/><path d="M13 11h10v12H12z" fill="#fbe36a" stroke="#c4a000"/><path d="M1 15l6-6 7 8-4 6z" fill="#f7c5c0" stroke="#d55"/><path d="M7 10l5 5L20 1l3 1-9 17-3 0-6-7z" fill="#ef5a50" stroke="#c22"/>',
gr:'<defs><linearGradient id="lg1"><stop offset="0" stop-color="#fff5f0"/><stop offset=".55" stop-color="#ef3b2c"/><stop offset="1" stop-color="#67000d"/></linearGradient></defs><path d="M2 0h21v24H2z" fill="url(#lg1)"/>',
br:'<path d="M0 0h4v24H0z" fill="#27e01b"/><path d="M4 0h4v24H4z" fill="#9a2fd0"/><path d="M8 0h4v24H8z" fill="#f39a1d"/><path d="M12 0h4v24h-4z" fill="#29c5c0"/><path d="M16 0h4v24h-4z" fill="#f0e"/><path d="M20 0h4v24h-4z" fill="#a4f03c"/>',
mp:'<defs><filter id="mb"><feGaussianBlur stdDeviation=".8"/></filter></defs><path d="M0 0h24v24H0z" fill="#fbdf98"/><g filter="url(#mb)"><path d="M14 1h9v11c-6 1-6-4-9-6z" fill="#ef7a4f"/><path d="M1 1h8c-3 6 5 8 1 13s2 7-2 9H6c2-6-4-8-2-13L1 8z" fill="#c4dfa0"/><path d="M2 3c4 2 8 4 6 9s2 6 1 11" stroke="#53a59b" stroke-width="1.800" fill="none"/><path d="M15 23c2-4 5-6 8-5v5z" fill="#f8b573"/></g>',
dots:pts([[5,6],[12,4],[9,10],[14,9]])+star,
nod:pts([[5,4],[17,3]])+'<path d="M6 5L3 22M7 4h9" stroke="#888"/><path d="M9 10l9 10M17 8L9 22" stroke="#7a7350" stroke-width="2.600"/>',
pen:'<path d="M2 2h17v4H2zM2 8h17v6H2zM2 17h17v5H2z" fill="#bfb98f" stroke="#8c8660"/><path d="M19 1l3 2-9 18-4 2 1-5z" fill="#aaa" stroke="#666"/>',
tr:'<path d="M1 2h13v12H1z" fill="#cfc9a0" stroke="#999"/><path d="M4 6h17v3H4zM6 10h14l-1 13H7z" fill="#c48b95" stroke="#a35c6a"/><path d="M10 12v9m3-9v9m3-9v9" stroke="#fff"/>',
cut:'<path d="M2 3l12 12M2 9l14 3" stroke="#777" stroke-width="2.500"/><ellipse cx="19" cy="9" rx="3" ry="4" fill="none" stroke="#a57f88" stroke-width="1.800"/><ellipse cx="18" cy="18" rx="3.200" ry="3.500" fill="none" stroke="#a57f88" stroke-width="1.800"/>',
cpy:'<path d="M9 2h9l3 3v13H9z" fill="#f4f4f4" stroke="#888"/><path d="M3 6h8l4 4v12H3z" fill="#fbfbfb" stroke="#777"/><path d="M5 12h7M5 15h7M5 18h7" stroke="#888"/>',
pst:'<path d="M4 2h16v20H4z" fill="#cfc9a8" stroke="#888"/><path d="M7 6h8l3 3v11H7z" fill="#fff" stroke="#888"/><path d="M8 1h8v4H8z" fill="#aaa"/><path d="M9 11h7M9 14h7M9 17h5" stroke="#888"/>',
un:'<path d="M10 3v5c8-1 11 3 9 9-1 3-4 5-7 5v-4c4-1 4-5-2-5v5L2 10z" fill="#b98a80" stroke="#a07068" stroke-width=".6"/>',
re:'<path d="M14 3v5C6 7 3 11 5 17c1 3 4 5 7 5v-4c-4-1-4-5 2-5v5l8-8z" fill="#8fa893" stroke="#708a76" stroke-width=".6"/>',
a1:'<path d="M4 21C4 9 8 4 20 3" fill="none" stroke="#888" stroke-width="1.500"/>'+pts([[4,21],[8,7],[20,3]])+star,
a2:'<circle cx="11" cy="10" r="8" fill="#eee" stroke="#777" stroke-width="1.500"/>'+pts([[11,2],[4,13],[18,7]])+star,
a3:'<ellipse cx="11" cy="11" rx="8.500" ry="5.500" transform="rotate(-40 11 11)" fill="#eee" stroke="#777" stroke-width="1.500"/>'+pts([[11,9],[15,3],[4,15]])+star,
a4:'<path d="M3 3h16v14H3z" fill="#eee" stroke="#777" stroke-width="1.500"/>'+pts([[3,3],[19,3],[3,17]])+star,
a5:'<path d="M9 2l9 4 1 8-9 6-7-9z" fill="#eee" stroke="#777" stroke-width="1.500"/>'+pts([[9,2],[18,6],[3,11],[10,20]])+star,
t0:tag('abc','#c9c08a','#8c8452','#555'),
pie:'<circle cx="9" cy="9" r="8" fill="#cfc9a0" stroke="#777"/><path d="M9 9V1a8 8 0 0 1 3 15z" fill="#79a58a"/><path d="M9 9l-8 2a8 8 0 0 0 10 6z" fill="#b86a6a"/><path d="M12 13h4v10h-4zM16 17h3v6h-3zM19 20h4v3h-4z" fill="#8ab0a0" stroke="#777"/>',
t1:tag('ab','#cfe5ff','#5a9be0','#223')+'<ellipse cx="19" cy="19" rx="4" ry="4.300" fill="#a31515" stroke="#700"/><path d="M18 15V8" stroke="#888"/>',
t2:tag('abc','#ffe1e1','#ef2929','#c00'),
t3:tag('ab','#c9c08a','#8c8452','#555')+'<ellipse cx="19" cy="19" rx="4" ry="4.300" fill="#8a5a5a"/>',
t4:tag('abc','#c9c08a','#8c8452','#555')+'<path d="M8 19c4-5 11-5 15 0-4 5-11 5-15 0z" fill="#fff" stroke="#777"/><circle cx="15.500" cy="19" r="2.500" fill="#555"/>',
t5:tag('abc','#c9c08a','#8c8452','#555')+'<path d="M13 14h11v10H13z" fill="#777"/><path d="M15 19h6m-3-3l3 3-3 3" stroke="#fff" stroke-width="1.600" fill="none"/>',
t6:tag('abc','#c9c08a','#8c8452','#555')+'<path d="M13 14h11v10H13z" fill="#777"/><path d="M21 17a3 3 0 1 0 0 4M21 15v3h-3" stroke="#fff" stroke-width="1.400" fill="none"/>',
t7:tag('abc','#c9c08a','#8c8452','#555')+'<path d="M13 14h11v10H13z" fill="#8c8452"/><path d="M15 22l6-6" stroke="#fff" stroke-width="2"/>',
gl1:globe+'<rect x="15" y="15" width="9" height="9" rx="1" fill="#3b8746"/><path d="M19.500 16.500v6M16.500 19.500h6" stroke="#fff" stroke-width="1.600"/>',
gl2:globe+'<rect x="15" y="15" width="9" height="9" rx="1" fill="#3b8746"/><circle cx="19" cy="19" r="2" fill="none" stroke="#fff" stroke-width="1.200"/><path d="M20.500 20.500l2 2" stroke="#fff"/>',
gl3:'<circle cx="12" cy="9.500" r="9.500" fill="#a9c3e2" stroke="#345" stroke-width="1.500"/><path d="M5 4l5 1 1 5-4 3-4-4zM14 3l5 3-2 5-4-3z" fill="#41618a"/><path d="M5 18l3-6h3v3h2v-3h3l3 6z" fill="#000"/><circle cx="7.500" cy="20" r="3.300" fill="#fff" stroke="#000" stroke-width="1.600"/><circle cx="16.500" cy="20" r="3.300" fill="#fff" stroke="#000" stroke-width="1.600"/>',
py:py+'<path d="M17 16l5 3.500-5 4" fill="none" stroke="#222" stroke-width="1.500"/>',
qp:'<path d="M0 0h24v24H0z" fill="#7b7b7b"/><path d="M1 14l8-1 7-11 2 10 5 3-10 6z" fill="#b98a14"/><path d="M10 14l7-11 1 9-5 6z" fill="#ffd94e"/><path d="M1 14l9 2 2 5 3-3-5-5z" fill="#37341c"/>',
sh:'<path d="M1 22V16l8-8 6 7 7 1v6z" fill="#12f71c" stroke="#000" stroke-width="1.300"/><circle cx="18" cy="6" r="3.200" fill="#fff20a"/><path d="M18 0v11M13 6h10M14.500 2.500l7 7M21.500 2.500l-7 7" stroke="#fff20a"/>',
qs:'<path d="M0 3h24v18H0z" fill="#9fd0fa"/><path d="M0 14l7-8 5 2 6-3 6 6v10H0z" fill="#c9853f"/><path d="M0 15c6-3 16-1 24-5v11H0z" fill="#ffe629"/><path d="M0 17l7-2 6 2 11-5v9H0z" fill="#5be04a"/><path d="M0 16l5 5H0z" fill="#f33"/><text x="12" y="19.500" font-size="7.500" font-weight="700" text-anchor="middle" fill="#553">QSCS</text>',
hb:'<path d="M2 1h20v22H2z" fill="#5f8fc4" stroke="#223a58" stroke-width="1.500"/><path d="M2 1h4v22H2z" fill="#2f4a6d"/><text x="14" y="17" font-size="14" text-anchor="middle" fill="#fff" font-family="DejaVu Serif">?</text>',
hm:'<path d="M5 6l6-4 2 3-6 5z" fill="#ddd" stroke="#555"/><path d="M9 6l9 16" stroke="#8a5a2b" stroke-width="2.500"/><path d="M9 13L4 22" stroke="#f2d33c" stroke-width="3"/><path d="M15 3l4 6-3 6 5 8M20 4l-4 8 4 4-3 7" stroke="#3d7a3d" stroke-width="1.500" fill="none"/>',
scr:'<path d="M3 2h17v19H7c-3 0-4-1-4-4z" fill="#eee" stroke="#777"/><path d="M7 2v17M10 6h8v9h-8z" fill="none" stroke="#777" stroke-dasharray="2 1.500"/><path d="M16 14l6 9M22 13l-5 10" stroke="#777"/>',
xx:'<path d="M4 3l10 19M19 2L8 14l6 9" stroke="#a39a68" stroke-width="2.500" fill="none"/>',
nn:'<path d="M4 23V8l14 12V3" fill="none" stroke="#8f9a8f" stroke-width="1.500"/><path d="M16 3l7 14" stroke="#aaa27a" stroke-width="3"/>'+pts([[5,6],[7,19]]),
float:'<path d="M8 3h12v11H8zM3 9h11v12H3z" fill="#eee" stroke="#555" stroke-width="2"/>',
xdock:'<path d="M4 4l16 16M20 4L4 20" stroke="#444" stroke-width="5"/>',
mags:'<circle cx="9.500" cy="9.500" r="7.500" fill="none" stroke="#777" stroke-width="1.800"/><path d="M15 15l7.500 7.500" stroke="#777" stroke-width="2.600"/>',
xb:'<circle cx="12" cy="12" r="12" fill="#9c9c9c"/><path d="M7.500 7.500l9 9m0-9l-9 9" stroke="#fff" stroke-width="2.600"/>',
folder:'<path d="M0 4.500C0 3 1 2.500 2 2.500h7l3 3.500v5H0z" fill="#f5ad0d"/><path d="M0 8c0-1 .5-1.500 1.500-1.500h7L11 5h11.500c1 0 1.500.5 1.500 1.500v13c0 1-.5 1.500-1.500 1.500h-21C.5 21 0 20.500 0 19.500z" fill="#ffd560"/><path d="M0 19h24c0 1.500-.5 2-1.500 2h-21C.5 21 0 20.500 0 19z" fill="#eab22f"/>',
chev:'<path d="M8 3l9 9-9 9" fill="none" stroke="#eee" stroke-width="4.500"/>',
chevt:'<path d="M8 4l7 8-7 8" fill="none" stroke="#888" stroke-width="2.800"/>',
cloud:'<path d="M6 19c-7-1-7-9-1-10C7 3 15 2 18 9c7 0 7 9 2 10z" fill="#1276d3"/><path d="M4 18c1-6 8-8 12-5 5-2 8 3 7 5-1 1-2 1.500-3 1.500H6z" fill="#2ba7f0"/>',
desk:'<defs><linearGradient id="lg2" x2="1" y2="1"><stop offset="0" stop-color="#35d0ea"/><stop offset="1" stop-color="#1667c4"/></linearGradient></defs><rect y="3" width="24" height="18" rx="1.500" fill="url(#lg2)"/><path d="M3.500 5.500h2.500v2.500H3.500zM3.500 9.800h2.500v2.500H3.500zM3.500 14h2.500v2.500H3.500zM17 20h2v2h-2zM20.500 20h2v2h-2z" fill="#fff"/>',
down:'<path d="M12 1v16M5 11l7 7 7-7" fill="none" stroke="#27bb96" stroke-width="2.600"/><path d="M3 21.500h18" stroke="#2ad1a0" stroke-width="3.200"/>',
pin:'<path d="M13 1l10 9-2 2-2-.5-4 5 0 4-2 2-5-5-5.500 5.500L1 23l1-2L7.500 15 3 10l2-2h4l5-4-.500-2z" fill="#94a0a8"/>',
nwp:page,opn:'<path d="M2 3h8l2 3h9v16H2z" fill="#e8c33c" stroke="#c9a227"/><path d="M5 8h18l-2 14H2z" fill="#fbdd62" stroke="#c9a227"/>',
sav:disk,sva:disk+'<path d="M13 13h11v11H13z" fill="#4e9a56"/><path d="M15 22l7-7" stroke="#fff" stroke-width="2.500"/>',
prp:'<path d="M2 1h14l4 4v18H2z" fill="#f7f7f7" stroke="#999"/><path d="M18 2l4 3-9 16-4 2 0-5z" fill="#dcc33f" stroke="#8a7a20"/>',
lay:page+'<path d="M3 2h7v20H3z" fill="#f0cf49" stroke="#c4a000"/><path d="M3 2h14v5H3z" fill="#f0cf49" stroke="#c4a000"/>'+star,
rep:page+'<path d="M8 7h8M8 10h6" stroke="#aaa"/><path d="M8 19v-4M11 19v-7M14 19v-5" stroke="#c77" stroke-width="1.500"/>'+star,
adm:page+'<path d="M8 7l5 5" stroke="#888" stroke-width="3"/><path d="M13 12l8 10" stroke="#d9b93c" stroke-width="3.500"/>',
fd:fold,
bks:'<path d="M2 2h19v20H5c-2 0-3-1-3-3z" fill="#e1e3e5" stroke="#aaa"/><path d="M6 2v17" stroke="#aaa"/><path d="M14 1h4v9l-2 3-2-3z" fill="#5b8abf"/>',
hom2:'<path d="M3 3h8l2 3h8v16H3z" fill="#b4e03c" stroke="#888a85"/><path d="M4 8l16 13M4 16l8-5" stroke="#fff" stroke-width="1.500"/><path d="M14 8c5-3 8 2 5 5l-3 4-3-4c-1-2-1-4 1-5z" fill="#138a1e"/>',
hom:fold+'<path d="M12 9l-5 5h2v6h6v-6h2z" fill="#fff" stroke="#333" stroke-width="1.500"/>',
sty:'<path d="M3 13l7-9 7 6-5 11z" fill="#f4d54a"/><path d="M2 14l5-3 4 8-3 3z" fill="#e33"/><path d="M9 7l4-4 3 3-3 5z" fill="#57c"/><path d="M23 2L14 13" stroke="#a8611c" stroke-width="2.500"/><path d="M8 13l7-3 3 4-5 8z" fill="#c9893b"/>',
adg:'<path d="M8 2h12v15H8zM5 5h12v15H5zM2 8h12v15" fill="#eee" stroke="#777" stroke-width="1.300"/><path d="M12 1v14" stroke="#4a7ab0" stroke-width="2"/><rect x="14" y="15" width="9" height="9" rx="3" fill="#3f8a4a"/><path d="M18.500 17v5M16 19.500h5" stroke="#fff" stroke-width="1.500"/>',
eye:'<path d="M1 12C6 2 17 2 22 12 17 21 6 21 1 12z" fill="#f4f4f4" stroke="#999" stroke-width="1.300"/><circle cx="11.500" cy="11" r="5.500" fill="#4a7cb8"/><circle cx="11.500" cy="10" r="2.300" fill="#112"/><path d="M17 19h7l-3.500 4.500z" fill="#444"/>',
fil:'<path d="M1 2h20L14 12v11l-5-3v-8z" fill="#5b8cc5" stroke="#46699a"/><path d="M1 1h20v4H1z" fill="#f3dc4b" stroke="#b89d1c"/><path d="M17 19h7l-3.500 4.500z" fill="#444"/>',
eps:'<path d="M9 2C3 1 3 8 7 8 2 8 1 15 9 14" fill="none" stroke="#777" stroke-width="2"/><path d="M12 13h11l-3 4v6h-5v-6z" fill="#999"/>',
exd:'<path d="M1 2h20M4 2v20" stroke="#888" stroke-width="2"/><path d="M6 7h5v5H6zM6 16h5v5H6z" fill="#f57900"/><path d="M13 1h5v13h4l-6.500 9L10 14h3z" fill="#5b8cc5" stroke="#2e5e98"/>',
exu:'<path d="M1 2h20M4 2v20" stroke="#888" stroke-width="2"/><path d="M6 7h5v5H6zM6 16h5v5H6z" fill="#f57900"/><path d="M13 23h5V10h4L15.500 1 10 10h3z" fill="#5b8cc5" stroke="#2e5e98"/>',
rem:'<path d="M2 2h18v18H2z" fill="#f3f3f1" stroke="#888" stroke-width="1.500"/><rect x="14" y="15" width="9" height="8" rx="2" fill="#e5393a"/><path d="M16 19h5" stroke="#fff" stroke-width="2"/>',
gears:gear(8,7,7,'#d3222a','#a11','#d3222a')+gear(18,10,5,'#777','#555','#777')+gear(12,18,4.500,'#8fb2e3','#68a','#8fb2e3')+'<path d="M17 19h7l-3.500 4z" fill="#444"/>',
pyc:'<g transform="scale(.82)">'+py+'</g><path d="M17 19.500h7l-3.500 4z" fill="#444"/>',
doc:'<path d="M4 2h11l5 5v15H4z" fill="#f2f2f2" stroke="#aaa" stroke-width="1.600"/><path d="M7 9h10M7 13h10M7 17h7" stroke="#aaa" stroke-width="1.500"/>',
edt:'<path d="M2 3h15v13H2z" fill="#c9c3a0"/><path d="M22 5l-8 14-3 3 0-5 7-13z" fill="#999"/>',
wr:'<path d="M2 3c3-3 9-1 9 3l3 4-3 3-4-4c-3 1-6-1-6-4l4 2 2-2z" fill="#ddd" stroke="#777"/><path d="M12 11l3-2 8 11-3 3z" fill="#e8cd5c" stroke="#877522"/>',
gdal:'<circle cx="15" cy="9" r="7.500" fill="#5cb8e8"/><path d="M13 6l6-2 1 5-5 4z" fill="#4d9b3e"/><path d="M2 7l10-6M6 3l4 6" stroke="#333" stroke-width="2"/><text x="12" y="23" font-size="10.500" font-weight="700" font-family="DejaVu Sans Condensed" textLength="23" lengthAdjust="spacingAndGlyphs" text-anchor="middle" fill="#000">GDAL</text>',
grass:'<path d="M12 2l8 9-8 10-8-10z" fill="#fff" stroke="#333" stroke-width="1.300"/><path d="M12 18V9M12 16L8 10M12 16l4-6M12 13l-2-6M12 13l3-5" stroke="#2a2" stroke-width="1.300"/><path d="M3 22.500h18" stroke="#555" stroke-width="1.200"/>',
pcr:'<path d="M0 3h24M0 21h24" stroke="#9db7d8" stroke-width="2.500"/><text x="12" y="17" font-size="12.500" text-anchor="middle" fill="#5b82b8" textLength="22" lengthAdjust="spacingAndGlyphs">PCR</text>',
saga:'<circle cx="12" cy="12" r="10" fill="none" stroke="#165a9c" stroke-width="2.800"/><path d="M20 4L5 10l14 8M8 8l10 6h6M12 13l8 7" stroke="#165a9c" stroke-width="2.500" fill="none"/>',
wna:'<circle cx="12" cy="12" r="11.300" fill="#fff" stroke="#ddb"/><path d="M10 23c2-6-2-10 2-13L19 3M12 10L5 4M11 12l10-4" stroke="#2b86d6" stroke-width="2" fill="none"/>',
wheels:'<path d="M3 3l17 18M20 2L4 20M2 10l12 12M9 2l13 12" stroke="#444" stroke-width="1.600"/><circle cx="8" cy="8" r="4.500" fill="#ddd" stroke="#444"/>',
lock:'<path d="M7 11V7c0-6 10-6 10 0v4" fill="none" stroke="#555" stroke-width="2"/><rect x="3" y="10" width="18" height="13" rx="2" fill="#666"/>',
spin:'<path d="M5 9h14l-7-8zM5 15h14l-7 8z" fill="#555"/>',
check:'<rect x="1" y="1" width="22" height="22" rx="3" fill="#fff" stroke="#999" stroke-width="1.500"/><path d="M5 12l5 6L19 4" fill="none" stroke="#333" stroke-width="3.200"/>',
wglobe:'<path d="M5 4h14l4 8-4 8H5l-4-8z" fill="#ccc" stroke="#888"/><path d="M1 12h22M12 3v18M7 4c-3 5-3 11 0 16M17 4c3 5 3 11 0 16M3 8h18M3 16h18" stroke="#777" fill="none"/>',
talk:'<path d="M12 2c14 0 14 16 1 16l-6 5 0-5.500C-3 14-1 2 12 2z" fill="#555"/><circle cx="7" cy="10" r="1.600" fill="#fff"/><circle cx="12" cy="10" r="1.600" fill="#fff"/><circle cx="17" cy="10" r="1.600" fill="#fff"/>'
};
const ic=(n,s)=>`<svg width="${s}" height="${s}" viewBox="0 0 24 24" fill="none">${I[n]}</svg>`;
document.querySelectorAll('[data-i]').forEach(e=>e.innerHTML=ic(e.dataset.i,e.dataset.s));

// toolbar tokens: "," caret, ",-" dimmed caret, "|" grip, "/" separator, "-x" disabled icon, "*x" pressed
const bar=(id,list)=>{document.getElementById(id).innerHTML=list.split(' ').map(t=>{
  if(t[0]===',')return `<span class="caretcell${t[1]?' opacity-50':''}"><i></i></span>`;
  if(t==='|')return '<span class="gripcell"><i></i></span>';
  if(t==='/')return '<span class="sepcell"><i></i></span>';
  const off=t[0]==='-',on=t[0]==='*',n=t.replace(/^[-*]/,'');
  return `<span class="cell${on?' pressed':''}${off?' dim':''}">${ic(n,19.6)}</span>`;}).join('')};
bar('tb1','-zf -zl -z1 zp -zn nm n3 bn bm clk rf | -sel ,- -frm ,- des , loc , | inf -aba *gear sig -tbl ,- rul , bal -zg ,- | g1 , g2 , hx fl tx spl ck gr br mp');
bar('tb2','-dots -nod ,- -pen -tr -cut -cpy -pst -un -re | -a1 -a2 ,- -a3 ,- -a4 ,- -a5 ,- | -t0 -pie / t1 t2 / -t3 -t4 -t5 -t6 -t7 | gl1 gl2 gl3 | py qp sh qs | hb | | hm -scr');
bar('tb3','-xx ,- -nn');

const slots=(id,arr)=>{document.getElementById(id).innerHTML=arr.map(([n,w,c,s])=>`<span class="d-flex justify-content-center ${c||''}" style="width:${w}px">${n==='/'?'<i style="width:.8px;height:9px;background:#ccc"></i>':n===','?'<svg width="6" height="4"><path d="M0 0h6L3 4z" fill="#999"/></svg>':ic(n,s||13)}</span>`).join('')};
slots('capastb',[['sty',16.5],['adg',24.5],['eye',16.5],['fil',25],['eps',16.5,'dim'],[',',10],['exd',22],['exu',19.5],['rem',20.5]]);
slots('ptb',[['gears',16,'',15],['pyc',26,'',15],['clks',14],['doc',26,'',14],['/',2],['edt',23,'dim'],['/',5],['wr',19,'',14]]);

const menu=[['nwp','<u>N</u>uevo',25,'Control+N',41],['','Nuevo usando plantilla',92,'>'],0,['opn','<u>A</u>brir...',28,'Control+A',41],['','Abrir formulario',60.5,'>'],['','Abrir <u>r</u>eciente',53,'>'],0,['','Cerrar',25],0,['sav','<u>G</u>uardar',31.5,'Control+G',41],['sva','Guardar <u>c</u>omo...',62,'Control+Mayúsculas+G',93],['','Guardar en',44],['','Revertir...',41],0,['prp','<u>P</u>ropiedades...',56,'Control+Mayúsculas+P',91.500],['','Opciones de autoen<u>s</u>amblado...',122.500],['','Importar/Exportar',71.500],0,['lay','Nueva composición de im<u>p</u>resión...',135,'Control+P',40],['rep','Nuevo infor<u>m</u>e...',66.500],['adm','Administrador de composiciones...',131.500],['','Composiciones',57],0,['','Modelos',32],0,['','Salir de QGIS',51.500,'Control+Q',42]];
document.getElementById('menu1').innerHTML=menu.map(m=>m?`<div class="mi${m[0]==='sva'?' hot':''}"${m[1][0]==='R'?' style="color:#808080"':''}><span class="mico">${m[0]?ic(m[0],12.6):''}</span><span class="mt"><span data-w="${m[2]}">${m[1]}</span></span>${m[3]==='>'?'<span class="tri" style="margin-left:98px"></span>':m[3]?`<span data-w="${m[4]}">${m[3]}</span>`:''}</div>`:'<div class="msep"><i></i></div>').join('');

const br=[['fd','Practica1A_Cartografia_Procesos',132,1],['fd','Practica1B_InvetarioDeslizamientos',139,1],['fd','spatial_data',48,1],['bks','Marcadores espaciales',88],['hom2','Inicio del proyecto',71.500],['hom','Inicio',20],['fd','C:\\',13],['fd','D:\\ (OS)',32]];
let bh='';for(let i=0;i<13;i++)bh+=`<div class="trow"${i===10?' style="background:#0078d7"':''}></div>`;
document.getElementById('browser').innerHTML=bh+br.map(([n,t,w,l])=>`<div class="trow" style="padding-left:${l?17.8:4.600}px"><span class="tri"></span><span style="margin-left:7.400px">${ic(n,13)}</span><span style="margin-left:4.400px" data-w="${w}">${t}</span></div>`).join('');

const pt=[['clks','Usado recientemente',83],'Análisis de redes|65','Análisis de vector|68','Análisis del terreno ráster|99.7','Análisis ráster|54','Cartografía|44.6','Cobertura vectorial|75.6','Conversión de nube de puntos|119.7','Creación de ráster|72.2','Creación de vectores|83','Database|37','Extracción de nube de puntos|116.4','Geometría vectorial|75.5','Gestión de datos de nube de puntos|141.8','GPS|15','Gráficos|31.4','Herramientas de archivo|95.2','Herramientas de capa|85.3','Herramientas ráster|78.6','Interpolación|51','Malla|19.3','Selección vectorial|71.3','Superposición vectorial|88.5','Tabla vectorial|56.8','Teselas 3D|42','Teselas vectoriales|74','Vector general|56.8',['hx','Density analysis',62.7],['gdal','GDAL',20.5],['grass','GRASS',26.4],['gear','OpenTopography',68.2],['pcr','PCRaster',36],['saga','SAGA Next Gen',61],['wna','Water Net Analyzer',77]];
document.getElementById('ptree').innerHTML=pt.map(r=>{if(typeof r==='string'){const [t,w]=r.split('|');r=['q',t,w]}return `<div class="trow" style="padding-left:5.900px"><span class="tri"></span><span style="margin-left:9.400px">${ic(r[0],12.400)}</span><span style="margin-left:4.900px" data-w="${r[2]}">${r[1]}</span></div>`}).join('');

document.getElementById('flist').innerHTML=[['Otros',35.300],['Rasters',44.800],['Shapes',45.200]].map(([t,w])=>`<div class="lgrid" style="height:34.400px"><div class="d-flex align-items-center" style="padding-left:23.600px">${ic('folder',20)}<span style="margin-left:5.200px" data-w="${w}">${t}</span></div><div style="padding-left:8.600px;color:#ddd"><span data-w="107.300">13/08/2024 18:04</span></div><div style="padding-left:8.400px;color:#ddd"><span data-w="63.800">File folder</span></div></div>`).join('');

// annotation arrows: tip, tail
const arr=[[53.5,38.6,181,89.3],[123.8,167.8,251.8,226.6],[684.2,202.1,811.6,260.8],[709.3,384.1,837,442.6],[569.8,590.5,697.8,649.7],[1086.5,692,1215,750.3]];
const nums=[['1',208,115],['2',289,244.4],['3',848.5,279],['4',735,667],['5',1251.5,768.5]];
const ap=arr.map(([x,y,a,b])=>`<path d="M${a} ${b}L${x+4} ${y+2}M${x+22} ${y-.6}L${x+3} ${y+1.3}L${x+13.6} ${y+16}"/>`).join('');
const np=nums.map(([n,x,y])=>`<text class="num" x="${x}" y="${y}" text-anchor="middle">${n}</text>`).join('');
document.getElementById('glow').innerHTML=`<defs><filter id="gb" x="-5%" y="-5%" width="110%" height="110%"><feGaussianBlur stdDeviation="2.900"/></filter></defs><g opacity=".5"><g filter="url(#gb)" stroke="#fff" stroke-linejoin="round"><g stroke-width="19">${ap}</g><g stroke-width="9" fill="#fff">${np}</g></g></g>`;
document.getElementById('ann').innerHTML=`<g stroke="#048" stroke-width="4" stroke-linejoin="miter">${ap}</g><g fill="#048">${arr.map(a=>`<circle cx="${a[2]}" cy="${a[3]}" r="3.900"/>`).join('')}<g stroke="#048" stroke-width=".5">${np}</g></g>`;

// fit each label to its column width by letter spacing
const probe=document.createElement('div');probe.style.cssText='width:100px;height:1px;position:absolute;visibility:hidden';
document.querySelector('.stage').append(probe);
const k=probe.getBoundingClientRect().width/100;probe.remove();
document.querySelectorAll('[data-w]').forEach(e=>{const n=e.getBoundingClientRect().width/k;e.style.letterSpacing=((+e.dataset.w-n)/e.textContent.length).toFixed(3)+'px'});
document.querySelectorAll('.ls').forEach(e=>e.style.letterSpacing='-.5px');
</script>
</body>
</html>
